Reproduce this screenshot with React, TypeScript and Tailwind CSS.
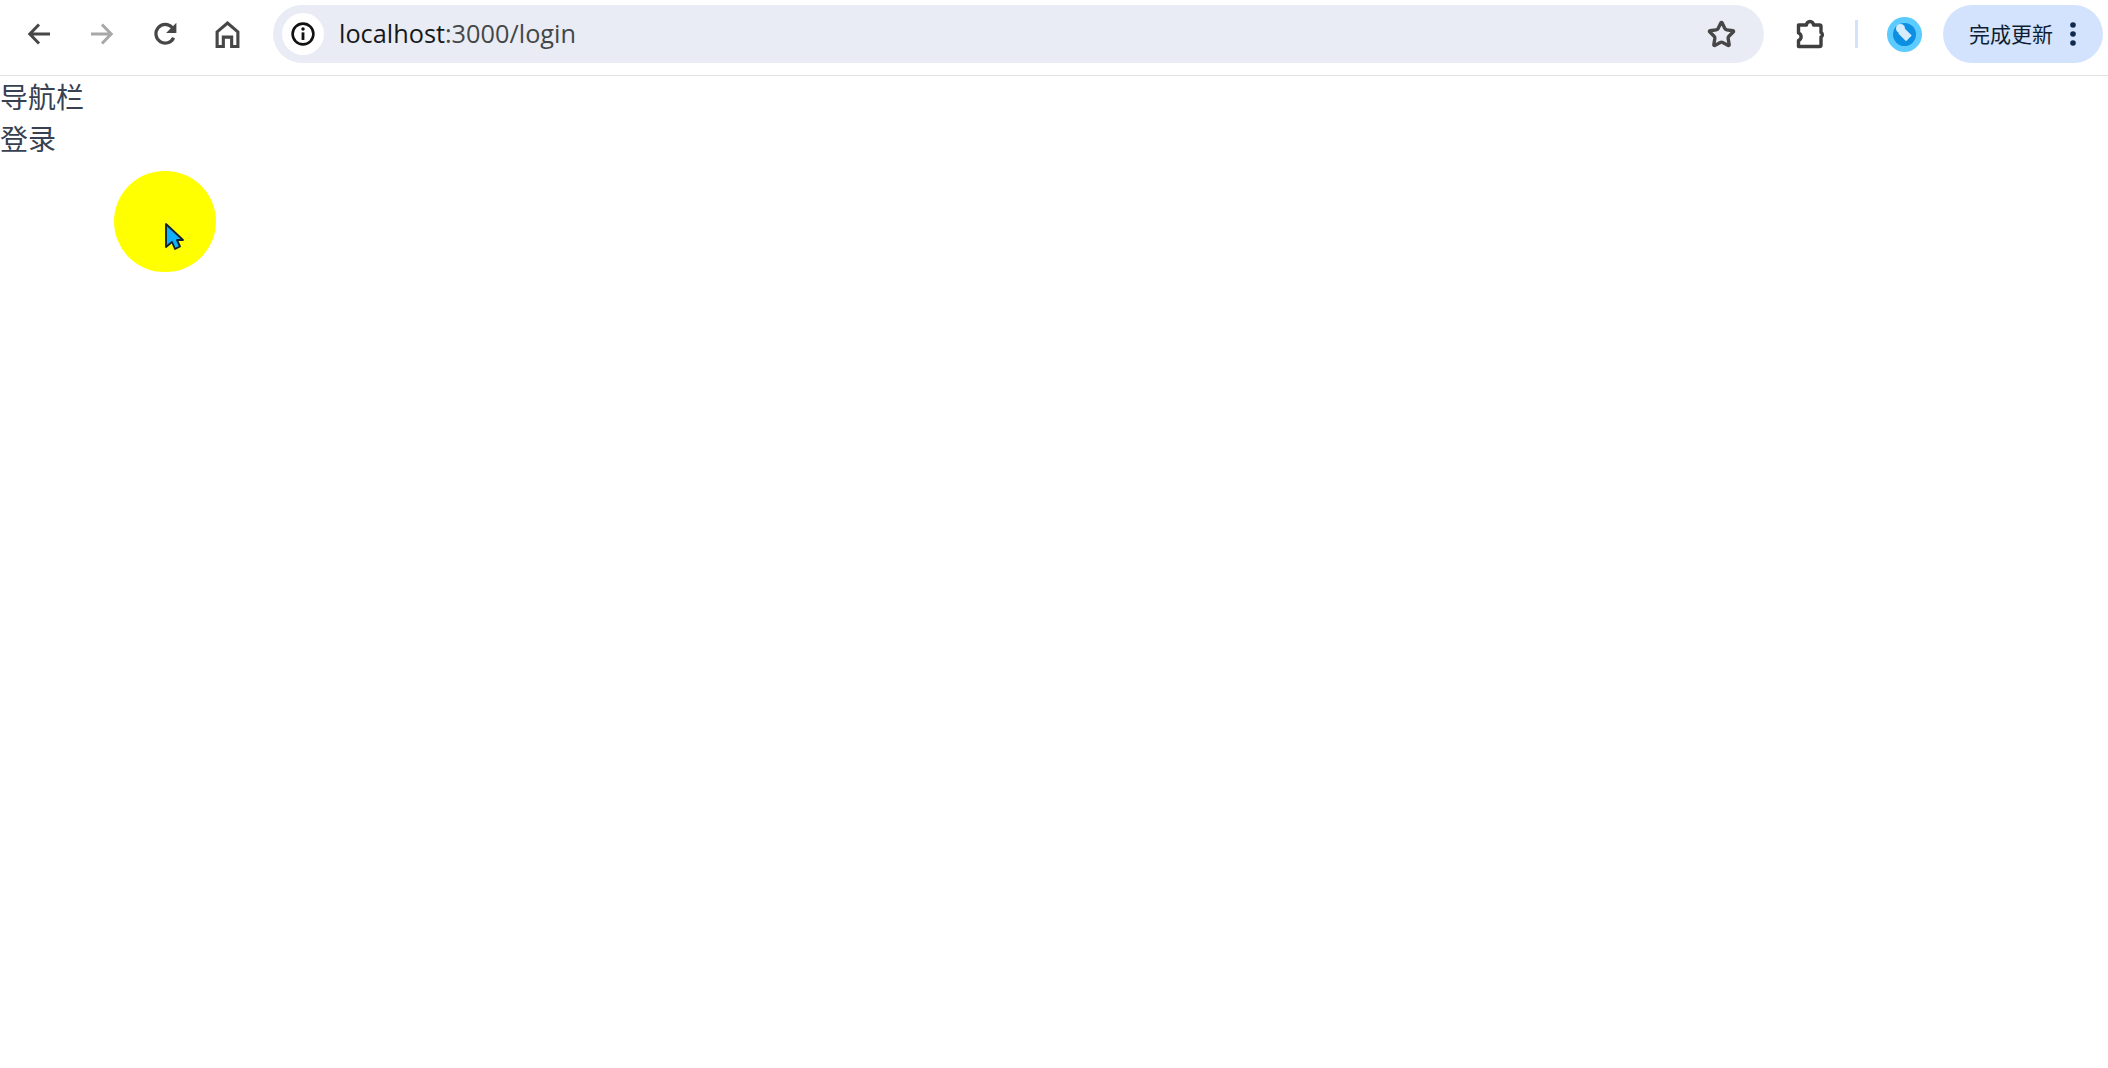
import { Star } from "lucide-react";

const cjk = "font-['Microsoft_YaHei','Noto_Sans_CJK_SC',sans-serif]";

function NavIcon({ children }: { children: React.ReactNode }) {
  return <div className="flex h-[63px] w-[63px] items-center justify-center">{children}</div>;
}

function Arrow({ flip, color }: { flip?: boolean; color: string }) {
  return (
    <svg width="24" height="24" viewBox="0 0 24 24" fill="none" stroke={color} strokeWidth="3" className={flip ? "-scale-x-100" : ""}>
      <path d="M23 12H3M12 2.5 2.8 12l9.2 9.5" />
    </svg>
  );
}

export default function App() {
  return (
    <div className="min-h-screen bg-white">
      {/* Browser toolbar */}
      <header className="flex h-[76px] items-start border-b border-[#e2e3e5] bg-white pt-[5px]">
        <div className="ml-[7px] flex h-[58px] items-center">
          <NavIcon>
            <Arrow color="#474747" />
          </NavIcon>
          <NavIcon>
            <Arrow flip color="#a8a8a8" />
          </NavIcon>
          <NavIcon>
            <svg width="26" height="26" viewBox="0 0 24 24" fill="none" stroke="#474747" strokeWidth="3">
              <path d="M20 15.5A8.6 8.6 0 1 1 18.6 6L21 8.6" />
              <path d="M22.5 1.5v9.5H13" fill="#474747" stroke="none" />
            </svg>
          </NavIcon>
          <NavIcon>
            <svg width="25" height="27" viewBox="0 0 24 26" fill="none" stroke="#474747" strokeWidth="3">
              <path d="M2 24.5V10.5L12 2l10 8.5v14h-6v-9H8v9z" />
            </svg>
          </NavIcon>
        </div>

        {/* Address bar */}
        <div className="ml-[14px] flex h-[58px] w-[1491px] items-center rounded-full bg-[#e9ecf5] pl-[9px] pr-[28px]">
          <div className="flex h-[42px] w-[42px] items-center justify-center rounded-full bg-white">
            <svg width="26" height="26" viewBox="0 0 24 24" fill="none" stroke="#111">
              <circle cx="12" cy="12" r="9.6" strokeWidth="2.4" />
              <path d="M12 10.5v7" strokeWidth="2.6" />
              <circle cx="12" cy="7.4" r="1.6" fill="#111" stroke="none" />
            </svg>
          </div>
          <div className="ml-[15px] flex-1 font-['Open_Sans',sans-serif] text-[25.3px] text-[#444746]">
            <span className="text-[#16181a]">localhost</span>:3000/login
          </div>
          <Star size={29} color="#474747" strokeWidth={2.8} />
        </div>

        <div className="flex h-[58px] items-center">
          <div className="ml-[31px] flex h-[30px] w-[30px] items-center justify-center">
            <svg width="30" height="30" viewBox="0 0 30 30" fill="none" stroke="#3f3f3f" strokeWidth="3.4" strokeLinejoin="round">
              <path d="M3.5 6h8a3.5 3.5 0 0 1 7 0h6a1.5 1.5 0 0 1 1.5 1.5v6a2.5 2.5 0 0 1 0 4.5v8a1.5 1.5 0 0 1-1.5 1.5H3.5V21.5a4 4 0 0 0 0-7.5z" />
            </svg>
          </div>
          <div className="ml-[30px] h-[28px] w-[3px] bg-[#d3e3fd]" />
          <div className="ml-[29px] flex h-[35px] w-[35px] items-center justify-center rounded-full bg-[#5ccbff]">
            <div className="relative h-[23px] w-[23px] rounded-full bg-[#0c8fe3]">
              <div className="absolute left-[3px] top-[1px] h-[9px] w-[9px] rounded-full bg-[#d7ecfb]" />
              <div className="absolute left-[8px] top-[6px] h-[11px] w-[8px] -rotate-45 bg-[#d7ecfb]" />
            </div>
          </div>
          <div className={`ml-[21px] flex h-[58px] w-[160px] items-center rounded-full bg-[#d3e3fd] pl-[26px] ${cjk}`}>
            <span className="text-[21px] text-[#0f1e33]">完成更新</span>
            <svg width="8" height="26" viewBox="0 0 8 26" fill="#0f2a4d" className="ml-[16px]">
              <circle cx="4" cy="4" r="2.8" />
              <circle cx="4" cy="13" r="2.8" />
              <circle cx="4" cy="22" r="2.8" />
            </svg>
          </div>
        </div>
      </header>

      {/* Page content */}
      <div className={`-mt-px text-[28px] leading-[42px] text-[#374151] ${cjk}`}>
        <div>导航栏</div>
        <div>登录</div>
      </div>

      {/* Mouse highlight overlay */}
      <div className="absolute left-[114px] top-[171px] h-[101px] w-[102px] rounded-full bg-[#ffff00]" />
      <svg width="20" height="29" viewBox="0 0 20 29" className="absolute left-[164px] top-[222px]">
        <path d="M2 2v23l6-5 3 7 5-2.5-3-6.5h6z" fill="#12b0fa" stroke="#10202c" strokeWidth="1.8" strokeLinejoin="round" />
      </svg>
    </div>
  );
}
